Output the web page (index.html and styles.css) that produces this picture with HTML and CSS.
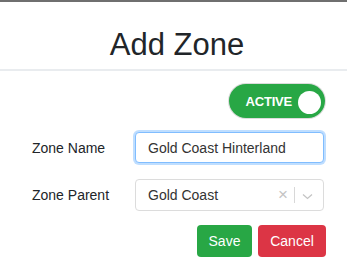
FILE: index.html
```html
<!DOCTYPE html>
<html lang="en">
  <head>
    <meta charset="UTF-8" />
    <meta name="viewport" content="width=device-width, initial-scale=1.0" />
    <title>Add Zone</title>
    <link rel="stylesheet" href="styles.css">
  </head>
  <body>
    <div class="modal">
      <div class="modal-header">
        <h2>Add Zone</h2>
      </div>

      <div class="modal-body">
        <div class="toggle-row">
          <div class="toggle">
            <span class="toggle-label">ACTIVE</span>
            <span class="toggle-knob"></span>
          </div>
        </div>

        <div class="form-row">
          <label for="zoneName">Zone Name</label>
          <input type="text" id="zoneName" class="field field-focus" value="Gold Coast Hinterland" />
        </div>

        <div class="form-row">
          <label>Zone Parent</label>
          <div class="field select">
            <span class="select-value">Gold Coast</span>
            <span class="select-clear">&times;</span>
            <span class="select-sep"></span>
            <svg class="select-arrow" width="11" height="7" viewBox="0 0 11 7">
              <path d="M1 1.5 L5.5 5.5 L10 1.5" fill="none" stroke="#c4c4c4" stroke-width="1.3" />
            </svg>
          </div>
        </div>

        <div class="actions">
          <button type="button" class="btn save">Save</button>
          <button type="button" class="btn cancel">Cancel</button>
        </div>
      </div>
    </div>
  </body>
</html>
```

FILE: styles.css
```css
* {
  margin: 0;
  padding: 0;
  box-sizing: border-box;
  font-family: "Liberation Sans", Arial, sans-serif;
}

body {
  background-color: #fff;
  color: #212529;
  font-size: 14px;
}

.modal {
  border-top: 2px solid #6f6f6f;
  width: 347px;
  height: 269px;
}

/* Cabeçalho */
.modal-header {
  height: 69px;
  border-bottom: 2px solid #e9ecef;
  padding: 24px 0 0 7px;
  text-align: center;
}

h2 {
  font-size: 31px;
  font-weight: normal;
  line-height: 37px;
  color: #212529;
}

.modal-body {
  padding: 13px 22px 0 32px;
}

/* Interruptor ativo */
.toggle-row {
  display: flex;
  justify-content: flex-end;
}

.toggle {
  width: 96px;
  height: 34px;
  border-radius: 17px;
  background-color: #28a745;
  box-shadow: 0 0 0 1px #dcdcdc;
  display: flex;
  align-items: center;
  justify-content: flex-end;
  padding-right: 4px;
  gap: 6px;
}

.toggle-label {
  color: #fff;
  font-weight: bold;
  font-size: 13px;
  letter-spacing: -0.2px;
}

.toggle-knob {
  width: 23px;
  height: 23px;
  border-radius: 50%;
  background: #fff;
  margin-top: 3px;
}

/* Linhas do formulário */
.form-row {
  display: flex;
  align-items: center;
  margin-top: 14px;
}

.form-row + .form-row {
  margin-top: 16px;
}

label {
  width: 103px;
  font-size: 14px;
  color: #212529;
}

.field {
  width: 189px;
  height: 32px;
  border: 1px solid #ced4da;
  border-radius: 4px;
  padding: 0 12px;
  font-size: 14px;
  color: #333;
  background: #fff;
}

.field-focus {
  height: 31px;
  border-color: #80bdff;
  box-shadow: 0 0 0 2px rgba(0, 123, 255, 0.25);
  outline: none;
}

.select {
  display: flex;
  align-items: center;
  border-color: #dcdcdc;
  padding-right: 10px;
}

.select-value {
  flex: 1;
}

.select-clear {
  color: #c4c4c4;
  font-size: 17px;
  margin-right: 6px;
}

.select-sep {
  width: 1px;
  height: 16px;
  background: #d8d8d8;
  margin-right: 7px;
}

.select-arrow {
  margin-top: 2px;
}

/* Botões */
.actions {
  display: flex;
  justify-content: flex-end;
  gap: 6px;
  margin-top: 14px;
  margin-right: -1px;
}

.btn {
  height: 32px;
  border: none;
  border-radius: 4px;
  color: #fff;
  font-size: 14px;
  padding: 0 10px;
  cursor: pointer;
}

.save {
  width: 55px;
  background-color: #28a745;
}

.cancel {
  width: 68px;
  background-color: #dc3545;
}
```
